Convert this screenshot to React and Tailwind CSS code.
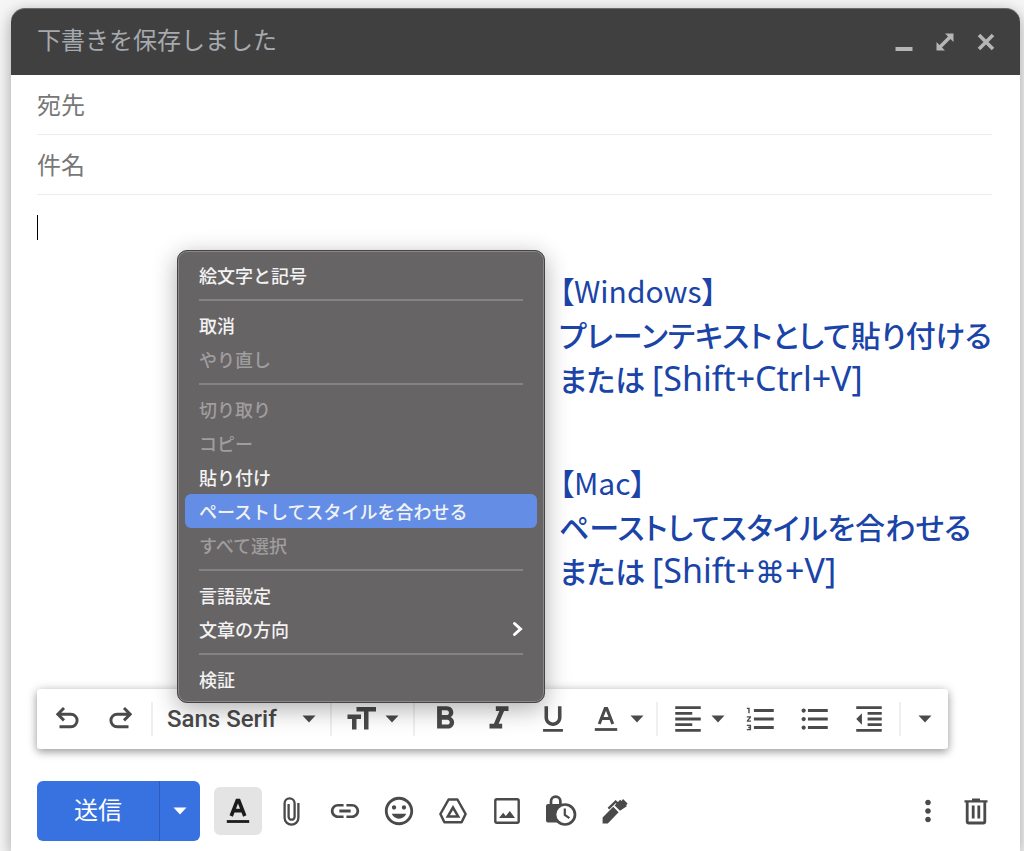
import {
  MdFormatAlignLeft,
  MdFormatBold,
  MdFormatIndentDecrease,
  MdFormatItalic,
  MdFormatListBulleted,
  MdFormatListNumbered,
  MdFormatSize,
  MdFormatUnderlined,
  MdInsertEmoticon,
  MdLink,
  MdMoreVert,
} from "react-icons/md";

const menuGroups = [
  [{ label: "絵文字と記号" }],
  [{ label: "取消" }, { label: "やり直し", disabled: true }],
  [
    { label: "切り取り", disabled: true },
    { label: "コピー", disabled: true },
    { label: "貼り付け" },
    { label: "ペーストしてスタイルを合わせる", active: true },
    { label: "すべて選択", disabled: true },
  ],
  [{ label: "言語設定" }, { label: "文章の方向", submenu: true }],
  [{ label: "検証" }],
];

function Caret() {
  return (
    <svg width="14" height="8" viewBox="0 0 14 8" fill="currentColor" aria-hidden="true">
      <path d="M.5.5h13L7 7.5z" />
    </svg>
  );
}

function UndoIcon({ className }) {
  return (
    <svg className={className} width="24" height="24" viewBox="0 0 24 24" fill="none" stroke="currentColor" strokeWidth="2.9" aria-hidden="true">
      <path d="M9 1 2.8 7.2 9 13.4M3 7.2h12.8a6.3 6.3 0 0 1 0 12.6H4.5" />
    </svg>
  );
}

function UnderlinedA({ bold }) {
  return (
    <svg width="24" height="26" viewBox="0 0 24 26" fill="none" stroke="currentColor" aria-hidden="true">
      <path d="M5.2 18 11.2 2.6h1.6L18.8 18M7.6 12.6h8.8" strokeWidth={bold ? 3.6 : 3} />
      <path d="M.8 23.5h22.4" strokeWidth="2.8" />
    </svg>
  );
}

function AttachIcon() {
  return (
    <svg width="17" height="29" viewBox="0 0 17 29" fill="none" stroke="currentColor" strokeWidth="2.3" aria-hidden="true">
      <path d="M15.4 6v14.8a6.9 6.9 0 0 1-13.8 0V6.4a5 5 0 0 1 10 0v13.3a3 3 0 0 1-6 0V7" />
    </svg>
  );
}

function DriveIcon() {
  return (
    <svg width="28" height="26" viewBox="0 0 28 26" fill="none" stroke="currentColor" strokeWidth="2.5" strokeLinejoin="round" aria-hidden="true">
      <path d="M9.6 1.5h8.8L26.6 16l-4 8.3H5.4L1.4 16z" />
      <path d="M14 9.5 8.8 18.4h10.4z" strokeLinejoin="miter" />
    </svg>
  );
}

function ImageIcon() {
  return (
    <svg width="26" height="26" viewBox="0 0 26 26" aria-hidden="true">
      <rect x="1.3" y="1.3" width="23.4" height="23.4" rx="1.5" fill="none" stroke="currentColor" strokeWidth="2.4" />
      <path d="M5 20l4.2-5.2 2.6 3.2 4-5 5.2 7z" fill="currentColor" />
    </svg>
  );
}

function LockClockIcon() {
  return (
    <svg width="32" height="32" viewBox="0 0 32 32" aria-hidden="true">
      <rect x="1" y="9" width="20" height="18.5" rx="2" fill="currentColor" />
      <path d="M6 10V6.4a4.7 4.7 0 0 1 9.4 0V10" fill="none" stroke="currentColor" strokeWidth="2.7" />
      <circle cx="20" cy="19.5" r="10" fill="#fff" stroke="currentColor" strokeWidth="2.7" />
      <path d="M19.8 13.5v6.4l4.6 3.2" fill="none" stroke="currentColor" strokeWidth="2.2" />
    </svg>
  );
}

function PenIcon() {
  return (
    <svg width="26" height="26" viewBox="0 0 26 26" aria-hidden="true">
      <path d="M.6 25.4v-6L11.2 8.8l5.4 5.4L5.8 25.4zM12.6 7.4 18.2 1.8l1.4 1.2L21 1l4.6 4.6-1.4 1.6.6 1L18 12.8z" fill="currentColor" />
      <path d="M6.4 10.6 13.6 3.6l3 2.6" fill="none" stroke="currentColor" strokeWidth="2.2" />
    </svg>
  );
}

function TrashIcon() {
  return (
    <svg width="24" height="27" viewBox="0 0 24 27" fill="none" stroke="currentColor" aria-hidden="true">
      <path d="M8 1.6h8M.5 3.4h23" strokeWidth="2.4" />
      <path d="M3.2 4v19.4a1.6 1.6 0 0 0 1.6 1.6h14.4a1.6 1.6 0 0 0 1.6-1.6V4" strokeWidth="2.8" />
      <path d="M9.2 7.5v13M14.8 7.5v13" strokeWidth="2.8" />
    </svg>
  );
}

function Separator() {
  return <span className="mx-[3px] h-[34px] w-0.5 shrink-0 bg-[#efefef]" />;
}

function ToolButton({ label, children }) {
  return (
    <button type="button" aria-label={label} className="flex h-12 w-[54px] shrink-0 items-center justify-center">
      {children}
    </button>
  );
}

function ContextMenu() {
  return (
    <div
      role="menu"
      className="absolute top-[55px] left-[166px] z-10 w-[368px] rounded-[10px] border border-[#454344] bg-[#676465] px-[7px] pt-[7px] pb-1.5 text-lg font-medium text-[#f3f3f3] shadow-[inset_0_0_0_1px_#8a8889,0_6px_24px_rgba(0,0,0,0.32)]"
    >
      {menuGroups.map((group, index) => (
        <div key={group[0].label}>
          {index > 0 && (
            <div className="flex h-4 items-center px-3.5">
              <span className="h-0.5 w-full bg-[#858384]" />
            </div>
          )}
          {group.map((item) => (
            <button
              key={item.label}
              type="button"
              role="menuitem"
              disabled={item.disabled}
              className={
                "flex h-[34px] w-full items-center justify-between rounded-md px-3.5 pb-px text-left " +
                (item.active ? "bg-[#648ee6]" : item.disabled ? "text-[#9f9d9e]" : "")
              }
            >
              <span>{item.label}</span>
              {item.submenu && (
                <svg width="11" height="16" viewBox="0 0 11 16" fill="none" stroke="#fff" strokeWidth="3" strokeLinecap="round" aria-hidden="true">
                  <path d="M2.5 2.5 8.5 8l-6 5.5" />
                </svg>
              )}
            </button>
          ))}
        </div>
      ))}
    </div>
  );
}

function Shortcut({ children }) {
  return <kbd className="font-['Noto_Sans',sans-serif] text-[34px] leading-none font-normal">{children}</kbd>;
}

function Notes() {
  return (
    <div className="absolute top-[73px] left-[548px] flex flex-col gap-[60px] text-[30px] leading-[44px] font-medium whitespace-nowrap text-[#1a44a8] [font-feature-settings:'palt']">
      <div>
        <h2 className="font-normal">【Windows】</h2>
        <p>プレーンテキストとして貼り付ける</p>
        <p>
          または <Shortcut>[Shift+Ctrl+V]</Shortcut>
        </p>
      </div>
      <div>
        <h2 className="font-normal">【Mac】</h2>
        <p>ペーストしてスタイルを合わせる</p>
        <p>
          または{" "}
          <Shortcut>
            [Shift+<span className="font-['DejaVu_Sans',sans-serif] text-[30px]">⌘</span>+V]
          </Shortcut>
        </p>
      </div>
    </div>
  );
}

function FormatBar() {
  return (
    <div className="mr-[72px] ml-[26px] flex h-[60px] items-center rounded-[3px] bg-white px-[3px] text-[#4a4a4a] shadow-[0_3px_8px_rgba(0,0,0,0.35),0_0_12px_rgba(0,0,0,0.1)]">
      <ToolButton label="元に戻す">
        <UndoIcon />
      </ToolButton>
      <ToolButton label="やり直す">
        <UndoIcon className="-scale-x-100" />
      </ToolButton>
      <Separator />
      <div className="relative flex w-[171px] shrink-0 items-center">
        <select
          aria-label="フォント"
          className="h-12 w-full appearance-none bg-transparent pl-[11px] font-[Roboto,sans-serif] text-2xl font-medium"
        >
          <option>Sans Serif</option>
        </select>
        <span className="pointer-events-none absolute right-[11px]">
          <Caret />
        </span>
      </div>
      <Separator />
      <button type="button" aria-label="サイズ" className="flex h-12 w-[75px] shrink-0 items-center gap-1.5 pl-2">
        <MdFormatSize size={36} />
        <Caret />
      </button>
      <Separator />
      <ToolButton label="太字">
        <MdFormatBold size={38} />
      </ToolButton>
      <ToolButton label="斜体">
        <MdFormatItalic size={38} />
      </ToolButton>
      <ToolButton label="下線">
        <MdFormatUnderlined size={34} />
      </ToolButton>
      <button type="button" aria-label="テキストの色" className="flex h-12 w-[73px] shrink-0 items-center gap-3 pl-3.5">
        <UnderlinedA />
        <Caret />
      </button>
      <Separator />
      <button type="button" aria-label="配置" className="flex h-12 w-[73px] shrink-0 items-center gap-1.5 pl-2.5">
        <MdFormatAlignLeft size={34} />
        <Caret />
      </button>
      <ToolButton label="番号付きリスト">
        <MdFormatListNumbered size={34} />
      </ToolButton>
      <ToolButton label="箇条書き">
        <MdFormatListBulleted size={34} />
      </ToolButton>
      <ToolButton label="インデント減">
        <MdFormatIndentDecrease size={34} />
      </ToolButton>
      <Separator />
      <button type="button" aria-label="その他の書式" className="flex h-12 w-[42px] shrink-0 items-center justify-center">
        <Caret />
      </button>
    </div>
  );
}

function ActionBar() {
  return (
    <div className="flex items-center pt-8 pr-5 pb-2.5 pl-[26px] text-[#4a4a4a]">
      <div className="mr-3.5 flex h-[60px] shrink-0 overflow-hidden rounded-md bg-[#3872e0] text-white">
        <button type="button" className="w-[122px] pb-1 text-2xl">
          送信
        </button>
        <button type="button" aria-label="その他の送信オプション" className="flex w-[41px] items-center justify-center border-l border-[#2a5cbf]">
          <Caret />
        </button>
      </div>
      <button type="button" aria-label="書式設定オプション" className="mr-0.5 flex size-12 shrink-0 items-center justify-center rounded-md bg-[#e4e4e4] text-[#1c1c1c]">
        <UnderlinedA bold />
      </button>
      <ToolButton label="ファイルを添付">
        <AttachIcon />
      </ToolButton>
      <ToolButton label="リンクを挿入">
        <MdLink size={34} />
      </ToolButton>
      <ToolButton label="絵文字を挿入">
        <MdInsertEmoticon size={34} />
      </ToolButton>
      <ToolButton label="ドライブを使用してファイルを挿入">
        <DriveIcon />
      </ToolButton>
      <ToolButton label="写真を挿入">
        <ImageIcon />
      </ToolButton>
      <ToolButton label="情報保護モード">
        <LockClockIcon />
      </ToolButton>
      <ToolButton label="署名を挿入">
        <PenIcon />
      </ToolButton>
      <button type="button" aria-label="その他のオプション" className="ml-auto flex size-12 items-center justify-center">
        <MdMoreVert size={34} />
      </button>
      <button type="button" aria-label="下書きを破棄" className="flex size-12 items-center justify-center">
        <TrashIcon />
      </button>
    </div>
  );
}

export default function App() {
  return (
    <div className="flex min-h-screen flex-col overflow-hidden bg-[#f6f6f6] pt-2 pr-1 pl-[11px] font-['Noto_Sans_CJK_JP',sans-serif]">
      <main className="flex flex-1 flex-col rounded-t-[14px] bg-white shadow-[0_4px_16px_rgba(0,0,0,0.35)]">
        <header className="flex h-[67px] items-center rounded-t-[14px] border-t border-[#6b6b6b] bg-[#404040] pr-3.5 pl-[26px] text-[#a6a9ad]">
          <h1 className="mr-auto pb-1.5 text-2xl">下書きを保存しました</h1>
          <button type="button" aria-label="最小化" className="flex h-10 w-[41px] items-center justify-center">
            <svg width="18" height="18" viewBox="0 0 18 18" fill="#b5b5b5" aria-hidden="true">
              <path d="M.5 14h17v4H.5z" />
            </svg>
          </button>
          <button type="button" aria-label="全画面表示" className="flex h-10 w-[41px] items-center justify-center">
            <svg width="18" height="18" viewBox="0 0 18 18" fill="#b5b5b5" aria-hidden="true">
              <path d="M9 .5h8.500V9l-3-3L6 14.500l3 3H.5V9l3 3L12 3.500z" />
            </svg>
          </button>
          <button type="button" aria-label="閉じる" className="flex h-10 w-[41px] items-center justify-center">
            <svg width="18" height="18" viewBox="0 0 18 18" stroke="#b5b5b5" strokeWidth="3.6" aria-hidden="true">
              <path d="M2 2l14 14M16 2 2 16" />
            </svg>
          </button>
        </header>
        <div className="flex flex-col pr-7 pl-[26px]">
          <input aria-label="宛先" placeholder="宛先" className="h-[60px] border-b border-[#e9edec] pb-0.5 text-2xl outline-none placeholder:text-[#777777]" />
          <input aria-label="件名" placeholder="件名" className="h-[60px] border-b border-[#e9edec] pb-0.5 text-2xl outline-none placeholder:text-[#777777]" />
        </div>
        <section className="relative flex min-h-[494px] flex-1 flex-col pt-5">
          <div role="textbox" aria-label="本文" className="flex-1 pl-[26px]">
            <span className="block h-[25px] w-px bg-black" />
          </div>
          <Notes />
          <ContextMenu />
        </section>
        <FormatBar />
        <ActionBar />
      </main>
    </div>
  );
}
